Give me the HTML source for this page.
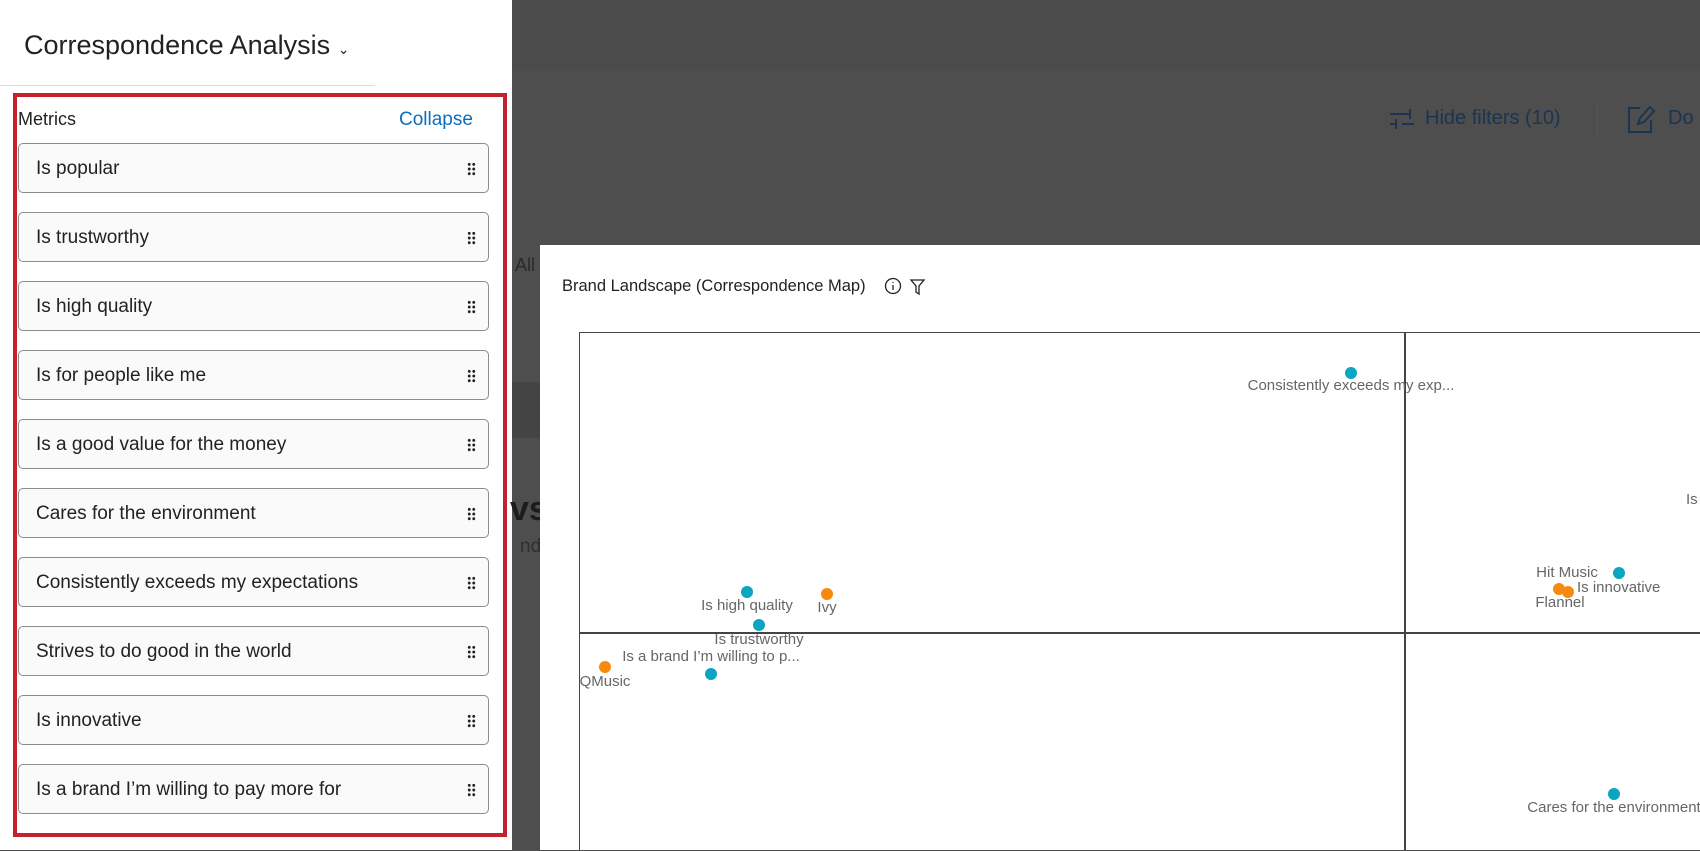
<!DOCTYPE html><html><head><style>
body{margin:0;width:1700px;height:850px;position:relative;overflow:hidden;background:#4e4e4e;font-family:"Liberation Sans",sans-serif}
.a{position:absolute}
.item{position:absolute;left:18px;width:471px;height:50px;border:1px solid #8c8c8c;border-radius:5px;background:#fafafa;font-size:19px;color:#222;line-height:50px;padding-left:17px;box-sizing:border-box}
.grip{position:absolute;right:12px;top:18px;width:9px;height:14px;background:radial-gradient(circle,#222 1.4px,transparent 1.6px) 0 0/4.5px 4.7px}
.l{position:absolute;font-size:15px;color:#666;transform:translateX(-50%);white-space:nowrap}
.d{position:absolute;width:12px;height:12px;border-radius:50%;margin:-6px 0 0 -6px}
.c{background:#0aa5c0}.o{background:#f7890e}
</style></head><body>
<div class="a" style="left:512px;top:0;width:1188px;height:69px;background:#4b4b4b"></div>
<div class="a" style="left:512px;top:382px;width:28px;height:56px;background:#444"></div>
<div class="a" style="left:0;top:0;width:512px;height:850px;background:#fff"></div>
<div class="a" style="left:24px;top:30px;font-size:27px;color:#222">Correspondence Analysis <span style="font-size:14px">&#8964;</span></div>
<div class="a" style="left:0;top:85px;width:375px;height:1px;background:#ddd"></div>
<div class="a" style="left:13px;top:93px;width:486px;height:736px;border:4px solid #c4212f"></div>
<div class="a" style="left:18px;top:109px;font-size:18px;color:#222">Metrics</div>
<div class="a" style="left:399px;top:109px;font-size:19px;color:#0b6fc1">Collapse</div>
<div class="item" style="top:143px">Is popular<div class="grip"></div></div>
<div class="item" style="top:212px">Is trustworthy<div class="grip"></div></div>
<div class="item" style="top:281px">Is high quality<div class="grip"></div></div>
<div class="item" style="top:350px">Is for people like me<div class="grip"></div></div>
<div class="item" style="top:419px">Is a good value for the money<div class="grip"></div></div>
<div class="item" style="top:488px">Cares for the environment<div class="grip"></div></div>
<div class="item" style="top:557px">Consistently exceeds my expectations<div class="grip"></div></div>
<div class="item" style="top:626px">Strives to do good in the world<div class="grip"></div></div>
<div class="item" style="top:695px">Is innovative<div class="grip"></div></div>
<div class="item" style="top:764px">Is a brand I’m willing to pay more for<div class="grip"></div></div>

<svg class="a" style="left:1388px;top:106px" width="30" height="26" viewBox="0 0 30 26" fill="none" stroke="#1b3550" stroke-width="2"><path d="M2 8h20M2 18h6M14 18h12M22 3v10M8 13v10"/></svg>
<div class="a" style="left:1425px;top:107px;font-size:20px;color:#1b3550">Hide filters (10)</div>
<div class="a" style="left:1597px;top:104px;width:1px;height:34px;background:#555"></div>
<svg class="a" style="left:1626px;top:104px" width="30" height="30" viewBox="0 0 30 30" fill="none" stroke="#1b3550" stroke-width="2"><path d="M14 4H3v24h22V16M12 20l2-6L24 3l4 4-10 11z"/></svg>
<div class="a" style="left:1668px;top:107px;font-size:20px;color:#1b3550">Do</div>
<div class="a" style="left:515px;top:255px;font-size:18px;color:#2a2a2a">All</div>
<div class="a" style="left:510px;top:490px;font-size:34px;font-weight:bold;color:#1c1c1c">vs</div>
<div class="a" style="left:520px;top:536px;font-size:19px;color:#2e2e2e">nds</div>

<div class="a" style="left:540px;top:245px;width:1160px;height:605px;background:#fff"></div>
<div class="a" style="left:562px;top:277px;font-size:16.5px;color:#222">Brand Landscape (Correspondence Map)</div>
<svg class="a" style="left:884px;top:277px" width="44" height="20" viewBox="0 0 44 20" fill="none" stroke="#222" stroke-width="1.3"><circle cx="9" cy="9" r="7.5"/><path d="M9 8v5M9 5v1"/><path d="M27 3h13l-5 6v8l-3-2V9z"/></svg>
<div class="a" style="left:579px;top:332px;width:1121px;height:518px;border-left:1.5px solid #444;border-top:1.5px solid #444"></div>
<div class="a" style="left:1404px;top:332px;width:1.5px;height:518px;background:#444"></div>
<div class="a" style="left:579px;top:632px;width:1121px;height:1.5px;background:#444"></div>

<div class="d c" style="left:1351px;top:373px"></div><div class="l" style="left:1351px;top:377px">Consistently exceeds my exp...</div>
<div class="d c" style="left:747px;top:592px"></div><div class="l" style="left:747px;top:597px">Is high quality</div>
<div class="d o" style="left:827px;top:594px"></div><div class="l" style="left:827px;top:599px">Ivy</div>
<div class="d c" style="left:759px;top:625px"></div><div class="l" style="left:759px;top:631px">Is trustworthy</div>
<div class="d o" style="left:605px;top:667px"></div><div class="l" style="left:605px;top:673px">QMusic</div>
<div class="d c" style="left:711px;top:674px"></div><div class="l" style="left:711px;top:648px">Is a brand I’m willing to p...</div>
<div class="d c" style="left:1619px;top:573px"></div><div class="l" style="left:1567px;top:564px">Hit Music</div>
<div class="d o" style="left:1559px;top:589px"></div><div class="d o" style="left:1568px;top:592px"></div>
<div class="l" style="left:1577px;top:579px;transform:none">Is innovative</div>
<div class="l" style="left:1560px;top:594px">Flannel</div>
<div class="l" style="left:1686px;top:491px;transform:none">Is</div>
<div class="d c" style="left:1614px;top:794px"></div><div class="l" style="left:1614px;top:799px">Cares for the environment</div>
</body></html>
